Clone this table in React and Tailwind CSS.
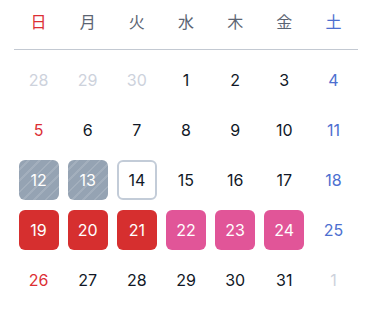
import React from 'react';

const days = ['日', '月', '火', '水', '木', '金', '土'];

// kind: muted | plain | blocked | today | holiday | event
const weeks = [
    [[28, 'muted'], [29, 'muted'], [30, 'muted'], [1], [2], [3], [4]],
    [[5], [6], [7], [8], [9], [10], [11]],
    [[12, 'blocked'], [13, 'blocked'], [14, 'today'], [15], [16], [17], [18]],
    [[19, 'holiday'], [20, 'holiday'], [21, 'holiday'], [22, 'event'], [23, 'event'], [24, 'event'], [25]],
    [[26], [27], [28], [29], [30], [31], [1, 'muted']],
];

const headColor = (i) => {
    if (i === 0) return 'text-[#dc2f34]';
    if (i === 6) return 'text-[#4d6fd0]';
    return 'text-[#5b6472]';
};

const cellClass = (kind, col) => {
    switch (kind) {
        case 'muted':
            return 'text-[#cdd2dc]';
        case 'blocked':
            return 'rounded-md text-white bg-[#95a3b3] bg-[repeating-linear-gradient(135deg,transparent_0px,transparent_6px,rgba(255,255,255,0.13)_6px,rgba(255,255,255,0.13)_8px)]';
        case 'today':
            return 'rounded-md border-2 border-[#c3ccd8] text-[#111827]';
        case 'holiday':
            return 'rounded-md bg-[#d62f2f] text-white';
        case 'event':
            return 'rounded-md bg-[#e15598] text-white';
        default:
            if (col === 0) return 'text-[#dc2f34]';
            if (col === 6) return 'text-[#4d6fd0]';
            return 'text-[#111827]';
    }
};

export default function App() {
    return (
        <div
            className="w-[372px] h-[313px] bg-white px-[14px]"
            style={{ fontFamily: 'Inter, "Noto Sans CJK JP", sans-serif' }}
        >
            <div className="grid grid-cols-7 pt-3 pb-[17px] border-b border-[#c3c9d2]">
                {days.map((d, i) => (
                    <div key={d} className={`text-center text-base leading-5 ${headColor(i)}`}>
                        {d}
                    </div>
                ))}
            </div>
            <div className="mt-[10px] flex flex-col gap-[10px]">
                {weeks.map((week, w) => (
                    <div key={w} className="grid grid-cols-7">
                        {week.map(([n, kind], i) => (
                            <div key={i} className="flex justify-center">
                                <div className={`w-10 h-10 flex items-center justify-center text-base ${cellClass(kind, i)}`}>
                                    {n}
                                </div>
                            </div>
                        ))}
                    </div>
                ))}
            </div>
        </div>
    );
}
